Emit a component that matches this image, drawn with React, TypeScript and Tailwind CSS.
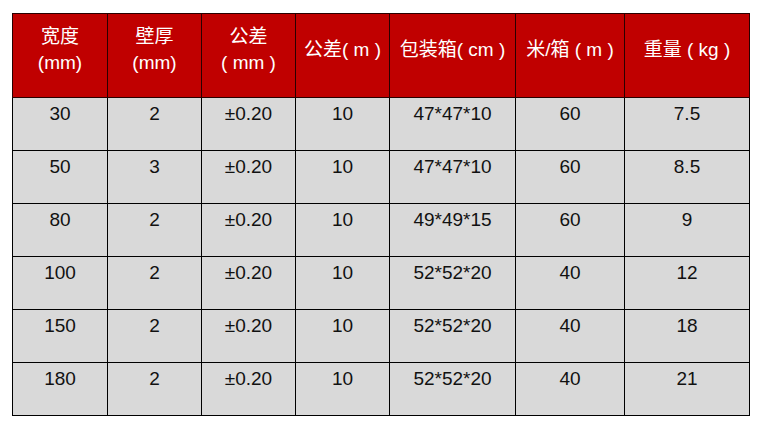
const HEAD: string[][] = [
  ['宽度', '(mm)'],
  ['壁厚', '(mm)'],
  ['公差', '( mm )'],
  ['公差( m )'],
  ['包装箱( cm )'],
  ['米/箱 ( m )'],
  ['重量 ( kg )'],
];

const ROWS: string[][] = [
  ['30', '2', '±0.20', '10', '47*47*10', '60', '7.5'],
  ['50', '3', '±0.20', '10', '47*47*10', '60', '8.5'],
  ['80', '2', '±0.20', '10', '49*49*15', '60', '9'],
  ['100', '2', '±0.20', '10', '52*52*20', '40', '12'],
  ['150', '2', '±0.20', '10', '52*52*20', '40', '18'],
  ['180', '2', '±0.20', '10', '52*52*20', '40', '21'],
];

const WIDTHS = ['w-[95px]', 'w-[94px]', 'w-[94px]', 'w-[94px]', 'w-[126px]', 'w-[109px]', 'w-[125px]'];

export default function App() {
  return (
    <div
      className="w-[767px] h-[442px] bg-white pl-[12px] pt-[13px]"
      style={{ fontFamily: '"Liberation Sans", Arial, "Noto Sans CJK SC", sans-serif' }}
    >
      <table className="table-fixed border-collapse w-[738px] text-[19px]">
        <colgroup>
          {WIDTHS.map((w, i) => (
            <col key={i} className={w} />
          ))}
        </colgroup>
        <thead>
          <tr className="h-[84px] bg-[#c00000] text-white">
            {HEAD.map((lines, i) => (
              <th key={i} className="border border-[#2a0000] font-normal align-middle pb-[12px] px-0 leading-[26px] whitespace-nowrap">
                {lines.map((l, j) => (
                  <div key={j}>{l}</div>
                ))}
              </th>
            ))}
          </tr>
        </thead>
        <tbody>
          {ROWS.map((row, r) => (
            <tr key={r} className="h-[53px] bg-[#d9d9d9] text-[#111111]">
              {row.map((c, i) => (
                <td key={i} className="border border-black align-top text-center pt-[4px] leading-[24px]">
                  {c}
                </td>
              ))}
            </tr>
          ))}
        </tbody>
      </table>
    </div>
  );
}
